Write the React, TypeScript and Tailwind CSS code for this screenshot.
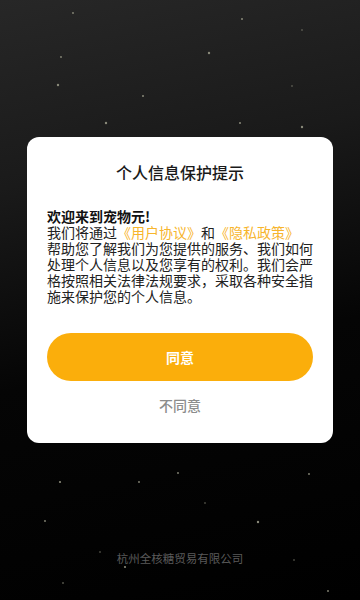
import React from "react";

const stars: [number, number, number][] = [
  [73, 13, 0.9], [242, 19, 1], [302, 30, 0.7], [209, 53, 1.2], [61, 57, 0.9],
  [58, 85, 1.2], [292, 86, 0.7], [143, 96, 1], [106, 123, 1.2], [240, 123, 1],
  [302, 127, 1.2], [60, 482, 1.1], [139, 482, 0.9], [178, 473, 0.9], [309, 474, 0.9],
  [205, 503, 0.7], [45, 521, 0.9], [258, 522, 1.2], [100, 552, 0.7], [125, 567, 1.1],
  [294, 560, 0.7], [63, 583, 0.8], [328, 591, 0.9],
];

function StarField() {
  return (
    <svg className="absolute inset-0 pointer-events-none" width="360" height="600" viewBox="0 0 360 600">
      {stars.map(([x, y, r], i) => (
        <circle key={i} cx={x} cy={y} r={r} fill="#8a8a7a" />
      ))}
    </svg>
  );
}

export default function App() {
  return (
    <div
      className="relative w-[360px] h-[600px] overflow-hidden flex flex-col items-center bg-[linear-gradient(168deg,#272727_0%,#1a1a1a_28%,#050505_58%,#000_100%)]"
      style={{ fontFamily: '"Noto Sans CJK SC", "Noto Sans", sans-serif' }}
    >
      <StarField />

      {/* Privacy dialog */}
      <div className="relative mt-[137px] w-[306px] h-[306px] rounded-[12px] bg-white px-5 flex flex-col">
        <div className="pt-[24px] text-center text-[16px] leading-[22px] font-medium text-[#1a1a1a]">
          个人信息保护提示
        </div>

        <div className="mt-[25px] text-[14px] leading-[16px] text-[#222]">
          <div className="font-bold text-[#111]">欢迎来到宠物元!</div>
          <div>
            我们将通过<span className="text-[#f7b52c]">《用户协议》</span>和
            <span className="text-[#f7b52c]">《隐私政策》</span>
          </div>
          <div>帮助您了解我们为您提供的服务、我们如何处理个人信息以及您享有的权利。我们会严格按照相关法律法规要求，采取各种安全指施来保护您的个人信息。</div>
        </div>

        <button className="mt-[29px] h-[48px] w-full rounded-full bg-[#fbae0b] text-white text-[14px] font-bold">
          同意
        </button>
        <button className="mt-[14px] h-[20px] w-full text-[14px] font-medium text-[#8c8c8c]">
          不同意
        </button>
      </div>

      <div className="relative mt-[107px] text-[11.5px] leading-[16px] text-[#5a5a5a]">
        杭州全核糖贸易有限公司
      </div>
    </div>
  );
}
